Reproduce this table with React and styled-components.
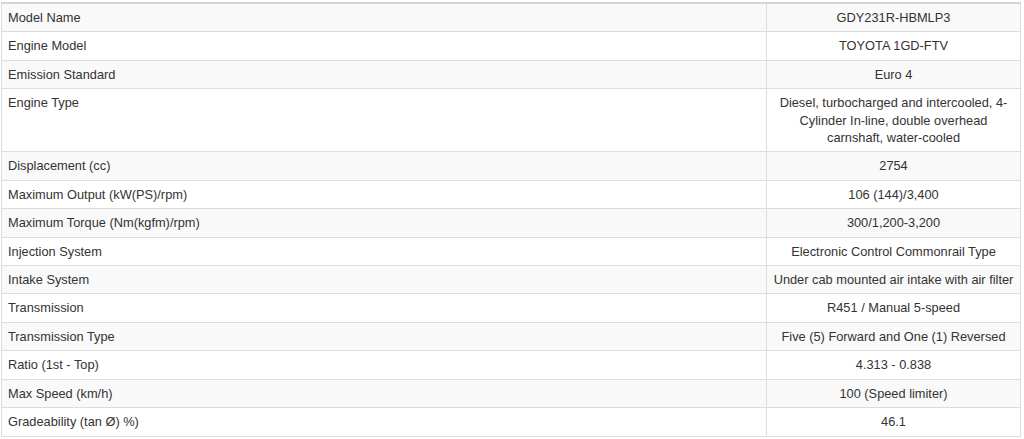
import React from 'react'
import styled, { createGlobalStyle } from 'styled-components'

const GlobalStyle = createGlobalStyle`
body {
  margin: 0;
  background: #fff;
  font-family: "Liberation Sans", Arial, sans-serif;
}`

const Container = styled.div`
padding: 2px 3px 0 1px;`

const Table = styled.table`
width: 1020px;
border-collapse: collapse;
border-top: 2px solid #d4d4d4;
font-size: 12.8px;
line-height: 17.4px;
color: #333;`

const Row = styled.tr`
background-color: ${(p) => (p.$striped ? '#f9f9f9' : '#fff')};`

const Label = styled.td`
width: 752px;
padding: 5px 6px;
border: 1px solid #ddd;
text-align: left;
vertical-align: top;`

const Value = styled.td`
padding: 5px 4px;
border: 1px solid #ddd;
text-align: center;
vertical-align: top;
white-space: pre-line;`

const specs = [
  ['Model Name', 'GDY231R-HBMLP3'],
  ['Engine Model', 'TOYOTA 1GD-FTV'],
  ['Emission Standard', 'Euro 4'],
  ['Engine Type', 'Diesel, turbocharged and intercooled, 4-\nCylinder In-line, double overhead\ncarnshaft, water-cooled'],
  ['Displacement (cc)', '2754'],
  ['Maximum Output (kW(PS)/rpm)', '106 (144)/3,400'],
  ['Maximum Torque (Nm(kgfm)/rpm)', '300/1,200-3,200'],
  ['Injection System', 'Electronic Control Commonrail Type'],
  ['Intake System', 'Under cab mounted air intake with air filter'],
  ['Transmission', 'R451 / Manual 5-speed'],
  ['Transmission Type', 'Five (5) Forward and One (1) Reversed'],
  ['Ratio (1st - Top)', '4.313 - 0.838'],
  ['Max Speed (km/h)', '100 (Speed limiter)'],
  ['Gradeability (tan Ø) %)', '46.1'],
]

export default function App() {
  return (
    <Container>
      <GlobalStyle />
      <Table>
        <tbody>
          {specs.map(([label, value], i) => (
            <Row key={label} $striped={i % 2 === 0}>
              <Label>{label}</Label>
              <Value>{value}</Value>
            </Row>
          ))}
        </tbody>
      </Table>
    </Container>
  )
}
